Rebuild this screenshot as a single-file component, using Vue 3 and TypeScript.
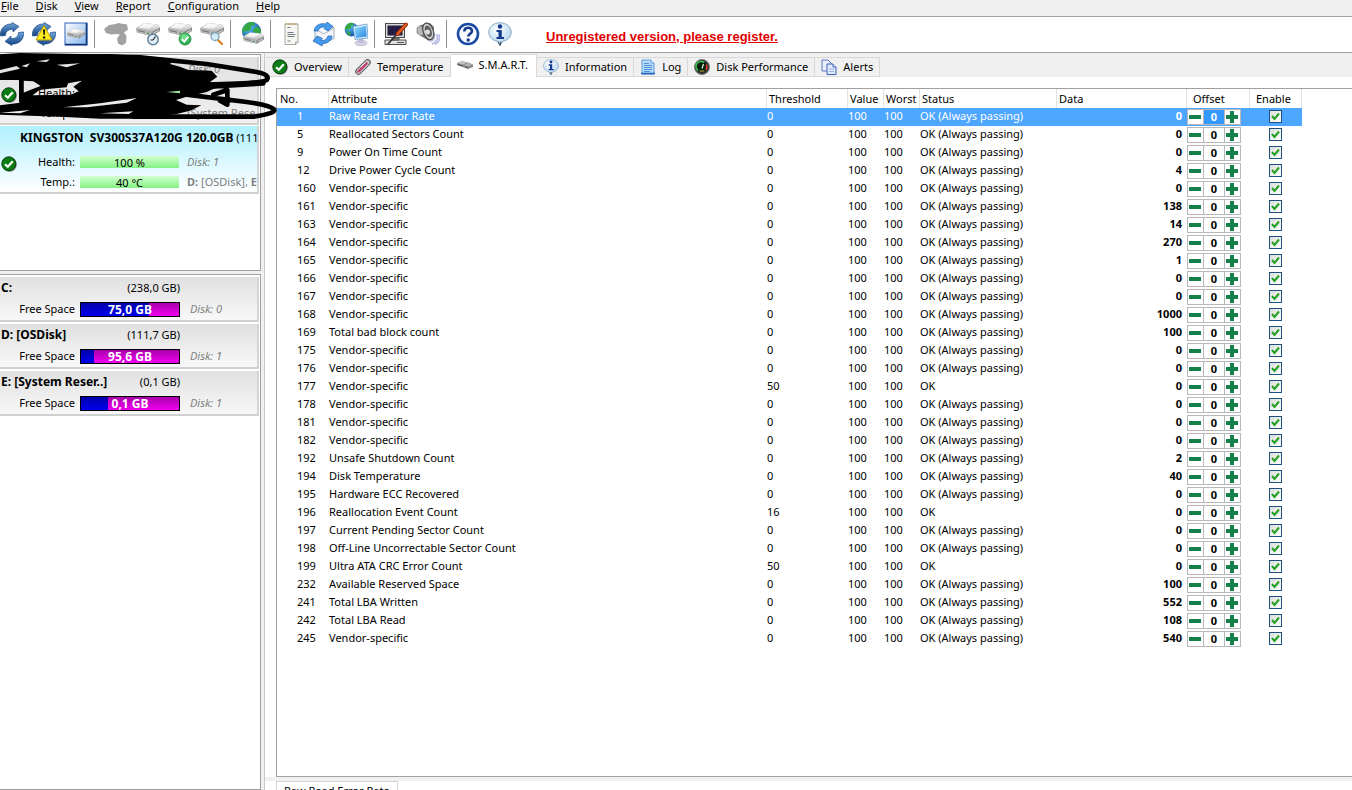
<script setup lang="ts">
import { ref } from 'vue'

interface Attr {
  no: number
  name: string
  threshold: number
  status: string
  data: number
  offset: number
  enabled: boolean
}

const PASSING = 'OK (Always passing)'

const row = (no: number, name: string, data: number, threshold = 0): Attr => ({
  no,
  name,
  threshold,
  status: threshold ? 'OK' : PASSING,
  data,
  offset: 0,
  enabled: true,
})

const attributes = ref<Attr[]>([
  row(1, 'Raw Read Error Rate', 0),
  row(5, 'Reallocated Sectors Count', 0),
  row(9, 'Power On Time Count', 0),
  row(12, 'Drive Power Cycle Count', 4),
  row(160, 'Vendor-specific', 0),
  row(161, 'Vendor-specific', 138),
  row(163, 'Vendor-specific', 14),
  row(164, 'Vendor-specific', 270),
  row(165, 'Vendor-specific', 1),
  row(166, 'Vendor-specific', 0),
  row(167, 'Vendor-specific', 0),
  row(168, 'Vendor-specific', 1000),
  row(169, 'Total bad block count', 100),
  row(175, 'Vendor-specific', 0),
  row(176, 'Vendor-specific', 0),
  row(177, 'Vendor-specific', 0, 50),
  row(178, 'Vendor-specific', 0),
  row(181, 'Vendor-specific', 0),
  row(182, 'Vendor-specific', 0),
  row(192, 'Unsafe Shutdown Count', 2),
  row(194, 'Disk Temperature', 40),
  row(195, 'Hardware ECC Recovered', 0),
  row(196, 'Reallocation Event Count', 0, 16),
  row(197, 'Current Pending Sector Count', 0),
  row(198, 'Off-Line Uncorrectable Sector Count', 0),
  row(199, 'Ultra ATA CRC Error Count', 0, 50),
  row(232, 'Available Reserved Space', 100),
  row(241, 'Total LBA Written', 552),
  row(242, 'Total LBA Read', 108),
  row(245, 'Vendor-specific', 540),
])
const selected = ref(1)

const menus = ['File', 'Disk', 'View', 'Report', 'Configuration', 'Help']

const toolbar = [
  [
    { icon: 'refresh', label: 'Refresh' },
    { icon: 'warn', label: 'Refresh alerts' },
    { icon: 'drive-box', label: 'Disk details' },
  ],
  [
    { icon: 'drive-off', label: 'Disk control' },
    { icon: 'drive-clock', label: 'Short self test' },
    { icon: 'drive-ok', label: 'Extended self test' },
    { icon: 'drive-find', label: 'Surface test' },
  ],
  [{ icon: 'globe-drive', label: 'Online disk information' }],
  [
    { icon: 'report', label: 'Report' },
    { icon: 'send', label: 'Send report' },
    { icon: 'network', label: 'Network' },
  ],
  [
    { icon: 'settings', label: 'Configuration' },
    { icon: 'sound', label: 'Sounds' },
  ],
  [
    { icon: 'help', label: 'Help' },
    { icon: 'info', label: 'About' },
  ],
]

const tabs = [
  { id: 'overview', icon: 'check', label: 'Overview' },
  { id: 'temperature', icon: 'thermo', label: 'Temperature' },
  { id: 'smart', icon: 'drive-small', label: 'S.M.A.R.T.' },
  { id: 'information', icon: 'info', label: 'Information' },
  { id: 'log', icon: 'log', label: 'Log' },
  { id: 'performance', icon: 'gauge', label: 'Disk Performance' },
  { id: 'alerts', icon: 'pages', label: 'Alerts' },
]
const activeTab = ref('smart')

const volumes = [
  { name: 'C:', size: '(238,0 GB)', free: '75,0 GB', used: 69, disk: 'Disk: 0' },
  { name: 'D: [OSDisk]', size: '(111,7 GB)', free: '95,6 GB', used: 13, disk: 'Disk: 1' },
  { name: 'E: [System Reser..]', size: '(0,1 GB)', free: '0,1 GB', used: 28, disk: 'Disk: 1' },
]
</script>

<template>
  <div class="app">
    <svg class="sprite" aria-hidden="true">
      <defs>
        <linearGradient id="gBlue" x1="0" y1="0" x2="0" y2="1">
          <stop offset="0" stop-color="#6fa8dc" /><stop offset="1" stop-color="#123f80" />
        </linearGradient>
        <linearGradient id="gSteel" x1="0" y1="0" x2="0" y2="1">
          <stop offset="0" stop-color="#fafafa" /><stop offset="1" stop-color="#b5b5b5" />
        </linearGradient>
        <linearGradient id="gScreen" x1="0" y1="0" x2="1" y2="1">
          <stop offset="0" stop-color="#8fdcff" /><stop offset="1" stop-color="#2b86dc" />
        </linearGradient>
        <linearGradient id="gBox" x1="0" y1="0" x2="1" y2="1">
          <stop offset="0" stop-color="#ffffff" /><stop offset="1" stop-color="#7fb2ee" />
        </linearGradient>
        <radialGradient id="gGlobe" cx="0.35" cy="0.3" r="0.8">
          <stop offset="0" stop-color="#5bc4ff" /><stop offset="1" stop-color="#0a3f9c" />
        </radialGradient>
        <radialGradient id="gBubble" cx="0.4" cy="0.3" r="0.8">
          <stop offset="0" stop-color="#ffffff" /><stop offset="1" stop-color="#a5cdea" />
        </radialGradient>
        <radialGradient id="gGreen" cx="0.4" cy="0.3" r="0.8">
          <stop offset="0" stop-color="#7be88f" /><stop offset="1" stop-color="#159a3b" />
        </radialGradient>
      </defs>

      <symbol id="i-refresh" viewBox="0 0 24 24">
        <path d="M.5 14C-.5 7 5 1.500 12 2V.5L19 4.500 13 10V7.500C8.500 7 5.500 9.500 5.500 13.500z" fill="url(#gBlue)" stroke="#1c4a86" stroke-width=".7" />
        <path d="M23.500 10c1 7-4.500 12.500-11.500 12V23.500L5 19.500 11 14v2.500c4.500.5 7.500-2 7.500-6z" fill="url(#gBlue)" stroke="#1c4a86" stroke-width=".7" />
      </symbol>
      <symbol id="i-warn" viewBox="0 0 24 24">
        <use href="#i-refresh" />
        <path d="M12 3.500L20 18H4z" fill="#ffee1c" stroke="#b79a00" stroke-width="1" stroke-linejoin="round" />
        <path d="M11 7.500h2.200l-.5 5.500h-1.200zM11 14.500h2.200v2H11z" fill="#111" />
      </symbol>
      <symbol id="i-drive" viewBox="0 0 24 24">
        <path d="M0 10.500L8 5l14 1.500 2 3.500v3l-8 5L1 14.500z" fill="#8d8d8d" />
        <path d="M0 10L8 5l14 1.500 2 3-8.500 4.500z" fill="url(#gSteel)" />
        <path d="M3 9.500l6-3.500 9 1-5 3.500z" fill="#fff" fill-opacity=".7" />
        <path d="M0 10.500L15.500 14v4L1 14.500z" fill="#b9b9b9" />
        <path d="M2 12.500l7 1.700" stroke="#666" stroke-width=".9" />
        <path d="M17 15.500l6-3.300" stroke="#d8d8d8" stroke-width="1" />
        <circle cx="12" cy="15.400" r=".9" fill="#2c9a39" />
      </symbol>
      <symbol id="i-drive-small" viewBox="0 0 16 16">
        <path d="M0 6l5-2 6 1.500 5 2v2.500L11 12 6 10 0 8z" fill="#8a8a8a" />
        <path d="M0 6l5-2 5 1.500L6 7.500z" fill="#c4c4c4" />
        <path d="M7 8l4-2 4 1.500-4 2z" fill="#b4b4b4" />
        <path d="M1 7.500l5 1.700M8 9.800l3 1.200" stroke="#4c4c4c" />
      </symbol>
      <symbol id="i-drive-box" viewBox="0 0 24 24">
        <rect x="1" y="1" width="22" height="22" fill="url(#gBox)" stroke="#2d63b5" />
        <path d="M22.500 1v21.500H1" fill="none" stroke="#0f3577" stroke-width="1.600" />
        <use href="#i-drive" x="3" y="3" width="18" height="18" />
      </symbol>
      <symbol id="i-drive-off" viewBox="0 0 24 24">
        <path d="M0 7l5-4 7-1 2-1 9 1.500 1 5-4 3 2.500 3.500-.5 7-4 2.500-4-2-1-5 3-4-3-.5-6 .5-5-1.500z" fill="#a2a2a2" />
      </symbol>
      <symbol id="i-drive-clock" viewBox="0 0 24 24">
        <use href="#i-drive" x="0" y="-4" width="24" height="24" />
        <circle cx="17" cy="17.500" r="5.200" fill="#e4f1fa" stroke="#5e7f95" stroke-width="1.500" />
        <path d="M17 18l2.500-3.500M17 18h-2.500" stroke="#222" stroke-width="1.200" />
      </symbol>
      <symbol id="i-drive-ok" viewBox="0 0 24 24">
        <use href="#i-drive" x="0" y="-4" width="24" height="24" />
        <circle cx="17" cy="17" r="6" fill="url(#gGreen)" stroke="#178538" stroke-width=".8" />
        <path d="M13.800 17l2.500 2.600 4-5" fill="none" stroke="#fff" stroke-width="1.900" />
      </symbol>
      <symbol id="i-drive-find" viewBox="0 0 24 24">
        <use href="#i-drive" x="0" y="-4" width="24" height="24" />
        <path d="M18 18l4 4" stroke="#d98324" stroke-width="2.400" stroke-linecap="round" />
        <circle cx="15" cy="14.500" r="4" fill="#d3ecfa" fill-opacity=".9" stroke="#7fa3ba" stroke-width="1.300" />
      </symbol>
      <symbol id="i-globe" viewBox="0 0 24 24">
        <circle cx="12" cy="12" r="11" fill="url(#gGlobe)" />
        <path d="M5 4c3-3 8-3.500 11-2l-1 3-4 1 1 3-4 3-3-1-3 3C1 10 2 7 5 4zM14 9l5-3 3.500 4 .3 4-3.300 5-3-2v-4l-3-1zM5 14l5 2 1 3-2 3C6 21 4 18 5 14z" fill="#36a843" />
      </symbol>
      <symbol id="i-globe-drive" viewBox="0 0 24 24">
        <use href="#i-globe" x="1" y="-1" width="21" height="21" />
        <use href="#i-drive" x="3" y="6" width="21" height="21" />
      </symbol>
      <symbol id="i-report" viewBox="0 0 24 24">
        <path d="M5 2h13v18.500L16 22.500H5z" fill="#f6f6f2" stroke="#a9a99f" />
        <path d="M5 2h13" stroke="#b79a58" stroke-width="1.600" stroke-dasharray="1.500 1" />
        <path d="M7.500 5.500h3M7.500 10.500h6M7.500 12.500h8M7.500 14.500h7M7.500 19h3" stroke="#767c82" stroke-width="1" />
        <path d="M18 20h-2.500v2.500" fill="#ddd" stroke="#a9a99f" />
      </symbol>
      <symbol id="i-send" viewBox="0 0 24 24">
        <path d="M3 7l10-4 9 2.500v11L12 21 3 18z" fill="#f3f5f8" stroke="#8b98a8" stroke-width=".8" />
        <path d="M3 7l9 5 10-6" fill="none" stroke="#b3bdc9" />
        <path d="M2 9C3 3 8 .8 14 2l1-2 6 4.500-5 4.500-4-2.500 1.500-1.500C10 4.500 7 5.500 6 9z" fill="#469cf0" stroke="#1c5fae" stroke-width=".7" />
        <path d="M20 14c0 4-4 7.500-9 7.500L10 24l-9-5 4-5 5.500 2.500-1.500 2c3 .5 6-1 7-4.500z" fill="#469cf0" stroke="#1c5fae" stroke-width=".7" />
      </symbol>
      <symbol id="i-network" viewBox="0 0 24 24">
        <use href="#i-globe" x="0" y="0" width="15" height="15" />
        <ellipse cx="17" cy="21" rx="6" ry="2.700" fill="#d5d5e6" stroke="#a2a2c0" stroke-width=".6" />
        <path d="M15 15h4l1 6h-6z" fill="#bcbcd8" />
        <path d="M9 4.500L23 2l1 14-13 1.500z" fill="#d9eefc" stroke="#6d9cc8" stroke-width=".8" />
        <path d="M10.500 6L22 4l.7 10.500L12 16z" fill="url(#gScreen)" />
      </symbol>
      <symbol id="i-settings" viewBox="0 0 24 24">
        <rect x="1.500" y="1.500" width="19" height="14" fill="#d9d9d9" stroke="#4a4a4a" />
        <rect x="3.500" y="3.500" width="15" height="10" fill="#241c42" />
        <path d="M1 18h21v4.500H1z" fill="#e0e0e0" stroke="#4a4a4a" />
        <path d="M8 16h7v2H8zM13 20.500h7" fill="#888" stroke="#555" />
        <path d="M13 12l-9 10" stroke="#333" stroke-width="1.800" />
        <path d="M22 2.500L13.500 12" stroke="#8a2a08" stroke-width="4" stroke-linecap="round" />
        <path d="M22 2.500L13.500 12" stroke="#e25a20" stroke-width="2.400" stroke-linecap="round" />
      </symbol>
      <symbol id="i-sound" viewBox="0 0 24 24">
        <path d="M16 22c5-2 6-6 5-10M19 22.500c4-2 5-6 4-10M14 19.500c4-1 5-4 4.500-8" fill="none" stroke="#b4b4e2" stroke-width="1.500" />
        <path d="M1 6l4-3 9-2 4 4-1 11-4 3-8-5-3-3z" fill="#747474" />
        <path d="M1 6l4-3 3 9-3 2-4-3z" fill="#b8b8b8" stroke="#666" stroke-width=".6" />
        <ellipse cx="12.500" cy="9.500" rx="5" ry="8.500" transform="rotate(-20 12 10)" fill="#cfcfcf" stroke="#4a4a4a" stroke-width="1.200" />
        <ellipse cx="12.500" cy="9.500" rx="3.200" ry="6" transform="rotate(-20 12 10)" fill="#5d5d5d" />
        <circle cx="11.500" cy="10" r="2.500" fill="#dcdcdc" />
      </symbol>
      <symbol id="i-help" viewBox="0 0 24 24">
        <circle cx="12" cy="12" r="10" fill="#f7fbff" stroke="#1a4aa3" stroke-width="2.600" />
        <path d="M8.300 9.500c0-5 7.700-5 7.700-.5 0 2.800-3.700 2.800-3.700 5.500" fill="none" stroke="#163a8c" stroke-width="2.600" />
        <circle cx="12.200" cy="18" r="1.700" fill="#163a8c" />
      </symbol>
      <symbol id="i-info" viewBox="0 0 24 24">
        <path d="M12 .8c6.500 0 11.200 4 11.200 9.400 0 4.700-3.400 8-8.200 9L12 23.300l-2.500-4C4.500 18.500.8 15 .8 10.200.8 4.800 5.500.8 12 .8z" fill="url(#gBubble)" stroke="#86a9c6" stroke-width="1" />
        <path d="M10 19.500l2 4 1-4" fill="none" stroke="#345" stroke-width="1" />
        <circle cx="12" cy="4.500" r="2.200" fill="#143a90" />
        <path d="M8.500 8h5.300v7H16v2H8.500v-2h2v-5h-2z" fill="#143a90" />
      </symbol>
      <symbol id="i-check" viewBox="0 0 16 16">
        <circle cx="8.600" cy="8.600" r="7.200" fill="#555" fill-opacity=".7" />
        <circle cx="7.800" cy="7.800" r="7" fill="#0a7d14" stroke="#0a3f0c" />
        <path d="M4 8.200l2.800 2.600 5-5.600" fill="none" stroke="#fff" stroke-width="2.200" />
      </symbol>
      <symbol id="i-thermo" viewBox="0 0 16 16">
        <path d="M3.500 12.500L12.500 3.500" stroke="#4c4c4c" stroke-width="6.400" stroke-linecap="round" />
        <path d="M3.500 12.500L12.500 3.500" stroke="#c9c1c5" stroke-width="4.600" stroke-linecap="round" />
        <path d="M3.500 12.500L11.500 4.500" stroke="#c23a72" stroke-width="2.400" stroke-linecap="round" />
        <path d="M6 8l4-4" stroke="#fff" stroke-width=".8" />
      </symbol>
      <symbol id="i-log" viewBox="0 0 16 16">
        <path d="M2 1h9l3 3v11H2z" fill="#b9dcfb" stroke="#5a9bdc" />
        <path d="M11 1v3h3" fill="#fff" stroke="#5a9bdc" />
        <path d="M4 4.500h5M4 6.500h8M4 8.500h8M4 10.500h8M4 12.500h6" stroke="#4a90dc" />
        <path d="M1 14.500h14" stroke="#1f67b8" stroke-width="1.600" />
      </symbol>
      <symbol id="i-gauge" viewBox="0 0 16 16">
        <circle cx="8" cy="8" r="7.500" fill="#3a3a3a" stroke="#777" />
        <circle cx="8" cy="8" r="5.500" fill="#06200b" />
        <path d="M4 11.500A5 5 0 0 1 10 3.500" fill="none" stroke="#35c04c" stroke-width="1.600" />
        <path d="M12 5.500a5 5 0 0 1 0 5.500" fill="none" stroke="#d23a2a" stroke-width="1.600" />
        <path d="M8 9.500L9.500 5" stroke="#e6f5e8" stroke-width="1.200" />
        <path d="M5.500 12h5" stroke="#d0b04a" />
      </symbol>
      <symbol id="i-pages" viewBox="0 0 16 16">
        <path d="M1 1h6l3 3v8H1z" fill="#e8eefc" stroke="#5a78c0" />
        <path d="M6 5h6l3 3v7.500H6z" fill="#dfeafd" stroke="#3f62b4" />
        <path d="M12 5v3h3" fill="#fff" stroke="#3f62b4" />
        <path d="M8 10h5M8 12.500h5" stroke="#9ab2e4" />
      </symbol>
    </svg>

    <nav class="menubar" aria-label="Main menu">
      <button v-for="m in menus" :key="m" type="button"><u>{{ m[0] }}</u>{{ m.slice(1) }}</button>
    </nav>

    <div class="toolbar" role="toolbar" aria-label="Tools">
      <template v-for="(group, g) in toolbar" :key="g">
        <span v-if="g" class="sep"></span>
        <button v-for="t in group" :key="t.icon" type="button" :aria-label="t.label">
          <svg><use :href="'#i-' + t.icon" /></svg>
        </button>
      </template>
      <a class="register" href="#register">Unregistered version, please register.</a>
    </div>

    <div class="body">
      <aside class="sidebar">
        <section class="panel disks">
          <article class="disk hidden-disk">
            <svg class="state"><use href="#i-check" /></svg>
            <div class="line title"><span class="muted-tag">Disk: 0</span></div>
            <div class="line"><span class="label">Health:</span></div>
            <div class="line"><span class="label">Temp.:</span><span class="meter ghost"></span><span class="note">[System Rese</span></div>
          </article>
          <article class="disk current">
            <svg class="state"><use href="#i-check" /></svg>
            <div class="line title"><b>KINGSTON&nbsp; SV300S37A120G 120.0GB</b>&nbsp;(111</div>
            <div class="line">
              <span class="label">Health:</span><span class="meter">100 %</span><i class="note">Disk: 1</i>
            </div>
            <div class="line">
              <span class="label">Temp.:</span><span class="meter">40 °C</span><span class="note"><b>D:</b> [OSDisk], <b>E</b></span>
            </div>
          </article>
          <svg class="scribble" viewBox="0 0 840 216" aria-hidden="true">
            <path
              fill-rule="evenodd"
              d="M0 20L60 12 200 14 330 12 420 18 520 32 510 42 540 50 565 60 635 62 652 80 630 96 660 108 620 126 560 140 528 150 560 164 604 166 570 182 530 192 420 206 300 206 180 200 0 194V166L60 158V98L56 90H0z
                M70 92L100 94 122 108 96 118 70 128z
                M98 136L118 120 150 116 200 112 204 100 246 92 220 110 236 124 212 134z
                M190 172L300 160 410 144 380 158 260 172z
                M300 190L400 184 386 192z
                M0 60L50 48 60 56 0 70z
                M110 34L150 28 140 36z
                M170 44L240 40 200 52z
                M64 48L90 40 80 52z
                M0 188L90 180 60 190z"
            />
            <path class="pen" d="M0 20L60 16 420 22 620 42 770 66Q812 74 800 90 790 100 620 104M630 110L790 100M64 84V154M400 200H760Q830 190 822 178 812 166 740 156L560 134M640 134L682 120V164L660 152" />
            <path class="green" d="M500 126l40-4v8z" />
          </svg>
        </section>

        <section class="panel volumes">
          <article v-for="v in volumes" :key="v.name" class="volume">
            <div class="head"><b>{{ v.name }}</b><span>{{ v.size }}</span></div>
            <div class="line">
              <span class="label">Free Space</span>
              <span class="space"><span class="used" :style="{ width: v.used + '%' }"></span><b>{{ v.free }}</b></span>
              <i class="note">{{ v.disk }}</i>
            </div>
          </article>
        </section>
      </aside>

      <main class="main">
        <div class="tabs" role="tablist">
          <button
            v-for="t in tabs"
            :key="t.id"
            type="button"
            role="tab"
            :aria-selected="activeTab === t.id"
            :class="{ active: activeTab === t.id }"
            @click="activeTab = t.id"
          >
            <svg><use :href="'#i-' + t.icon" /></svg>{{ t.label }}
          </button>
        </div>

        <div class="grid">
          <table>
            <colgroup>
              <col class="c-no" /><col class="c-attr" /><col class="c-thr" /><col class="c-val" /><col class="c-val" />
              <col class="c-stat" /><col class="c-data" /><col class="c-off" /><col class="c-en" />
            </colgroup>
            <thead>
              <tr>
                <th>No.</th><th>Attribute</th><th>Threshold</th><th>Value</th><th>Worst</th>
                <th>Status</th><th>Data</th><th class="mid-off">Offset</th><th class="last">Enable</th>
              </tr>
            </thead>
            <tbody>
              <tr v-for="a in attributes" :key="a.no" :class="{ selected: selected === a.no }" @click="selected = a.no">
                <td class="no">{{ a.no }}</td>
                <td>{{ a.name }}</td>
                <td>{{ a.threshold }}</td>
                <td>100</td>
                <td>100</td>
                <td>{{ a.status }}</td>
                <td class="data">{{ a.data }}</td>
                <td class="off">
                  <div class="spin">
                    <button type="button" aria-label="Decrease offset" @click.stop="a.offset--">
                      <svg viewBox="0 0 14 14"><path d="M1 7h12" /></svg>
                    </button>
                    <input v-model.number="a.offset" type="text" :aria-label="'Offset for attribute ' + a.no" />
                    <button type="button" aria-label="Increase offset" @click.stop="a.offset++">
                      <svg viewBox="0 0 14 14"><path d="M1 7h12M7 1v12" /></svg>
                    </button>
                  </div>
                </td>
                <td class="en">
                  <label class="tick">
                    <input v-model="a.enabled" type="checkbox" :aria-label="'Enable attribute ' + a.no" />
                    <svg v-if="a.enabled" viewBox="0 0 13 13"><path d="M3 6l2.500 3L10 3.500" /></svg>
                  </label>
                </td>
              </tr>
            </tbody>
          </table>
        </div>

        <div class="chart-tabs"><button type="button">Raw Read Error Rate</button></div>
      </main>
    </div>
  </div>
</template>

<style>
html,
body {
  margin: 0;
  background: #f0f0f0;
}
</style>

<style scoped>
.app {
  display: flex;
  flex-direction: column;
  height: 100vh;
  overflow: hidden;
  background: #f0f0f0;
  color: #000;
  font: 11px/18px 'Noto Sans', 'Open Sans', sans-serif;
}
.sprite {
  position: absolute;
  width: 0;
  height: 0;
}
button {
  margin: 0;
  padding: 0;
  border: 0;
  background: none;
  color: inherit;
  font: inherit;
}
svg {
  display: block;
}

.menubar {
  display: flex;
  flex: none;
  gap: 17px;
  height: 16px;
  padding-left: 1px;
  border-bottom: 1px solid #a0a0a0;
}
.menubar button {
  height: 12px;
  line-height: 12px;
}

.toolbar {
  display: flex;
  flex: none;
  align-items: center;
  box-sizing: border-box;
  gap: 8px;
  height: 36px;
  padding-bottom: 2px;
  border-bottom: 1px solid #a0a0a0;
  background: #fff;
}
.toolbar svg {
  width: 24px;
  height: 24px;
}
.sep {
  width: 1px;
  height: 28px;
  margin: 0 1px 0 -2px;
  background: #8c8c8c;
}
.register {
  margin-left: 26px;
  padding-top: 6px;
  color: #e00000;
  font: bold 13px/18px 'Liberation Sans', sans-serif;
}

.body {
  display: flex;
  flex: 1;
  min-height: 0;
}
.sidebar {
  display: flex;
  flex: 0 0 261px;
  flex-direction: column;
  gap: 3px;
  padding-top: 1px;
  min-width: 0;
}
.panel {
  border: 1px solid #a0a0a0;
  border-left: 0;
  background: #fff;
}
.disks {
  position: relative;
  box-sizing: border-box;
  height: 217px;
  padding: 2px 1px 0 0;
}
.volumes {
  flex: 1;
  padding: 2px 1px 0 0;
}
.line {
  display: flex;
  align-items: center;
  height: 20px;
  white-space: nowrap;
}
.label {
  flex: 0 0 75px;
  text-align: right;
}
.note {
  margin-left: 8px;
  color: #808080;
}
.disk {
  position: relative;
  box-sizing: border-box;
  height: 68px;
  margin-bottom: 1px;
  overflow: hidden;
  border-right: 2px solid #d4d4d4;
  border-bottom: 2px solid #d0d0d0;
}
.hidden-disk {
  background: linear-gradient(#e0e0e0, #f0f0f0);
}
.current {
  background: linear-gradient(#b0f0ff, #fff);
}
.disk .title {
  height: 24px;
  margin-bottom: 2px;
  padding-left: 20px;
}
.title b {
  font-size: 12px;
}
.muted-tag {
  margin-left: 168px;
  color: #808080;
  font-style: italic;
}
.state {
  position: absolute;
  top: 30px;
  left: 1px;
  width: 16px;
  height: 16px;
}
.meter {
  flex: 0 0 99px;
  height: 12px;
  margin-left: 5px;
  background: linear-gradient(#d4ffd0, #84f284);
  line-height: 14px;
  text-align: center;
}
.ghost {
  visibility: hidden;
}
.scribble {
  position: absolute;
  top: -5px;
  left: 0;
  width: 280px;
  height: 72px;
}
.scribble .pen {
  fill: none;
  stroke: #000;
  stroke-width: 14;
  stroke-linecap: round;
  stroke-linejoin: round;
}
.scribble .green {
  fill: #a0e8a0;
}

.volume {
  box-sizing: border-box;
  height: 45px;
  margin-bottom: 2px;
  border-right: 2px solid #d4d4d4;
  border-bottom: 2px solid #d0d0d0;
  background: linear-gradient(#e0e0e0, #f8f8f8);
}
.head {
  display: flex;
  justify-content: space-between;
  width: 179px;
  padding: 1px 0 1px 1px;
  line-height: 20px;
}
.head b {
  font-size: 12px;
}
.space {
  position: relative;
  box-sizing: border-box;
  flex: 0 0 100px;
  height: 15px;
  margin-left: 5px;
  border: 1px solid #000;
  background: linear-gradient(#a800a8, #f000f0);
  color: #fff;
  font-size: 12px;
  line-height: 14px;
  text-align: center;
}
.space b {
  position: relative;
}
.used {
  position: absolute;
  inset: 0 auto 0 0;
  background: linear-gradient(#0000a8, #0000f0);
}
.space + .note {
  margin-left: 10px;
}

.main {
  display: flex;
  flex: 1;
  flex-direction: column;
  min-width: 0;
  margin-left: 3px;
  border-left: 1px solid #c8c8c8;
  background: #fff;
}
.tabs {
  display: flex;
  flex: none;
  align-items: flex-end;
  height: 24px;
  padding-left: 1px;
  background: #f0f0f0;
}
.tabs button {
  display: flex;
  align-items: center;
  box-sizing: border-box;
  height: 20px;
  padding: 0 6px 1px;
  border: 1px solid #d9d9d9;
  border-left: 0;
  white-space: nowrap;
}
.tabs .active {
  height: 23px;
  padding: 0 8px 3px 6px;
  border-bottom: 0;
  background: #fff;
}
.tabs svg {
  width: 16px;
  height: 16px;
  margin-right: 6px;
}

.grid {
  flex: 1;
  min-height: 0;
  margin: 11px 0 0 11px;
  overflow: hidden;
  border: 1px solid #a0a0a0;
  border-right: 0;
}
table {
  width: 1025px;
  border-collapse: collapse;
  table-layout: fixed;
}
.c-no { width: 51px; }
.c-attr { width: 438px; }
.c-thr { width: 81px; }
.c-val { width: 36px; }
.c-stat { width: 137px; }
.c-data { width: 130px; }
.c-off { width: 63px; }
.c-en { width: 53px; }
th {
  height: 19px;
  padding: 0 0 0 3px;
  font-weight: normal;
  line-height: 19px;
  text-align: left;
  white-space: nowrap;
}
th + th {
  box-shadow: inset 1px 0 #e2e2e2;
}
th.mid-off {
  padding-left: 7px;
}
th.last {
  padding-left: 7px;
  box-shadow: inset 1px 0 #e2e2e2, inset -1px 0 #e2e2e2;
}
td {
  box-sizing: border-box;
  height: 18px;
  padding: 0 0 2px 1px;
  line-height: 16px;
  white-space: nowrap;
}
.no {
  padding-left: 20px;
}
.data {
  padding-right: 4px;
  font-weight: bold;
  text-align: right;
}
.off {
  padding-bottom: 0;
}
.en {
  padding: 0 0 1px;
}
.selected {
  background: #4da6ff;
  color: #fff;
}
.spin {
  display: flex;
  box-sizing: border-box;
  width: 54px;
  height: 16px;
  border: 1px solid #b8b8b8;
  background: #fff;
}
.spin button {
  flex: 0 0 15px;
  height: 14px;
}
.spin svg {
  width: 14px;
  height: 14px;
  fill: none;
  stroke: #14804a;
  stroke-width: 4;
}
.spin input {
  flex: 1;
  box-sizing: border-box;
  width: 22px;
  height: 14px;
  min-width: 0;
  margin: 0;
  padding: 0;
  border: solid #b8b8b8;
  border-width: 0 1px;
  background: #fff;
  color: #000;
  font: bold 11px/14px 'Noto Sans', sans-serif;
  text-align: center;
}
.selected .spin input {
  background: #3399ff;
  color: #fff;
}
.tick {
  position: relative;
  display: block;
  width: 13px;
  height: 13px;
  margin: 0 auto;
}
.tick input {
  appearance: none;
  display: block;
  box-sizing: border-box;
  width: 13px;
  height: 13px;
  margin: 0;
  border: 1px solid #1c5180;
  background: linear-gradient(135deg, #dcdcd7, #fff);
}
.tick svg {
  position: absolute;
  inset: 0;
  fill: none;
  stroke: #21a121;
  stroke-width: 2;
}

.chart-tabs {
  flex: none;
  height: 13px;
  overflow: hidden;
  border-top: 4px solid #f0f0f0;
  box-sizing: border-box;
}
.chart-tabs button {
  display: block;
  box-sizing: border-box;
  height: 20px;
  margin-left: 11px;
  padding: 0 7px;
  border: 1px solid #d4d4d4;
  line-height: 18px;
}
</style>
